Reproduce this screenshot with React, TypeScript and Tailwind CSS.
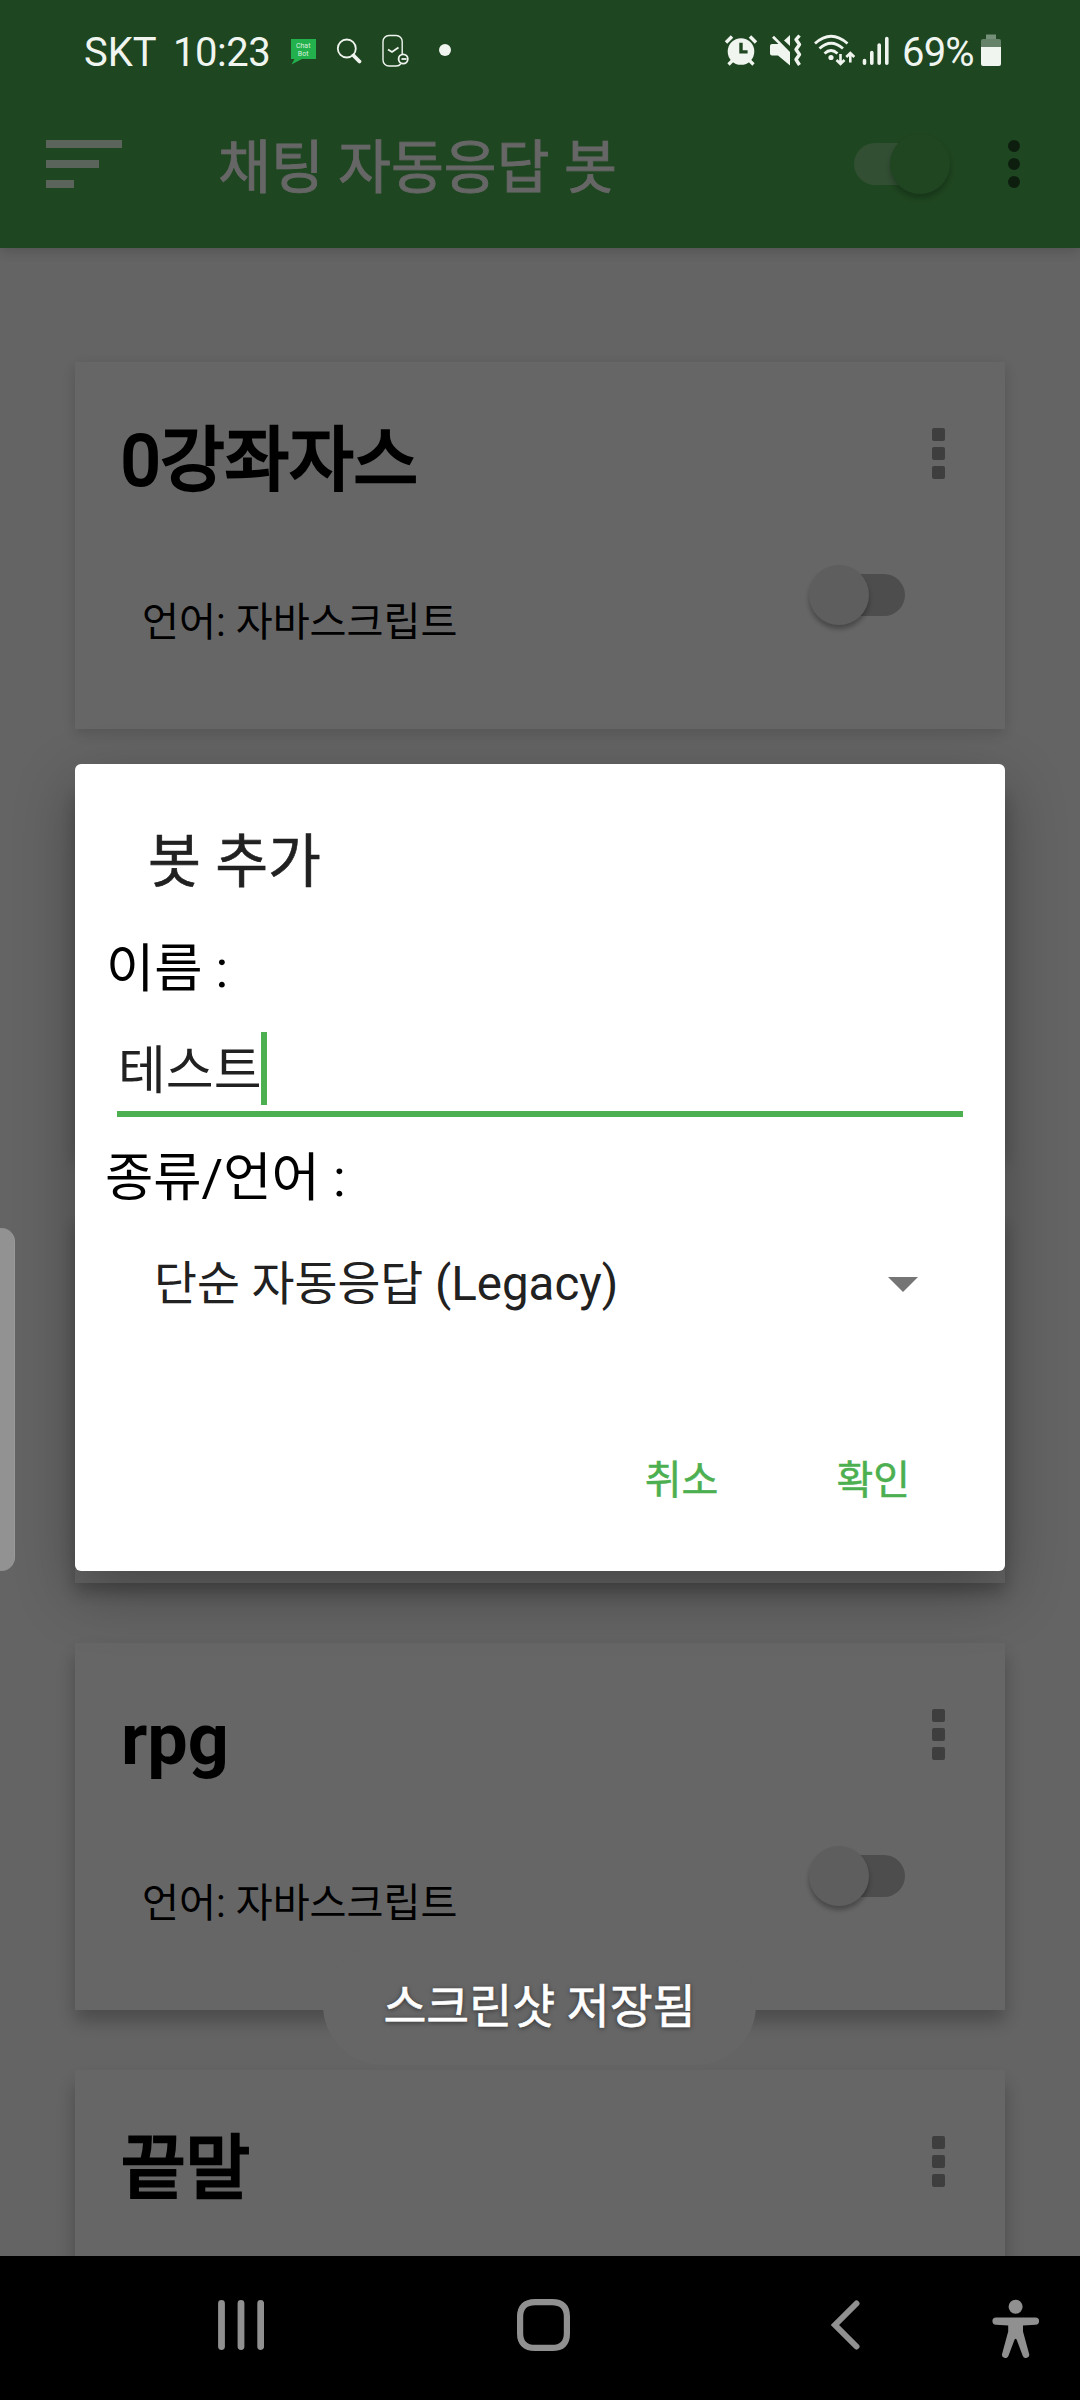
type Bot = { id: number; name?: string; lang?: string; title: string; shadow: string };

// Hangul titles use the regular cut thickened by a stroke, Latin ones the real bold
const hangulTitle = "mt-[59px] text-[70px] font-normal [-webkit-text-stroke:3px_black]";
const latinTitle = "mt-[57px] text-[72px] font-bold";

const bots: Bot[] = [
  { id: 1, name: "0강좌자스", lang: "자바스크립트", title: hangulTitle, shadow: "shadow-[0_4px_14px_rgba(0,0,0,0.16)]" },
  { id: 2, title: hangulTitle, shadow: "shadow-[0_7px_16px_rgba(0,0,0,0.2)]" },
  { id: 3, title: hangulTitle, shadow: "shadow-[0_9px_16px_rgba(0,0,0,0.24)]" },
  { id: 4, name: "rpg", lang: "자바스크립트", title: latinTitle, shadow: "shadow-[0_11px_18px_rgba(0,0,0,0.26)]" },
  { id: 5, name: "끝말", title: hangulTitle, shadow: "shadow-[0_13px_18px_rgba(0,0,0,0.26)]" },
];

function StatusBar() {
  return (
    <div className="relative z-20 flex h-[104px] items-start justify-between pl-[84px] pr-[79px] pt-[32px] text-[40px] leading-[42px] text-[#f0f5f0]">
      <div className="flex h-10 items-start">
        <span className="w-[89px]">SKT</span>
        <span className="w-[116px] tracking-[-0.5px]">10:23</span>

        {/* Chat bot notification */}
        <svg className="mt-[6px] ml-[1px]" width="27" height="28" viewBox="0 0 27 28">
          <path d="M1 1h25v20H12L1.500 26.500 4.500 21H1z" fill="#22b14c" />
          <text x="13.200" y="10" textAnchor="middle" fontSize="7" fill="#d8f0de">Chat</text>
          <text x="13.200" y="18" textAnchor="middle" fontSize="7" fill="#d8f0de">Bot</text>
        </svg>

        {/* Search */}
        <svg className="mt-[6px] ml-[19px]" width="27" height="28" viewBox="0 0 27 28" fill="none" stroke="currentColor">
          <circle cx="10.800" cy="10.500" r="9" strokeWidth="1.800" />
          <path d="M17.500 17.500l6 6" strokeWidth="3.800" strokeLinecap="round" />
        </svg>

        {/* Phone care */}
        <svg className="mt-[2px] ml-[18px]" width="28" height="35" viewBox="0 0 28 35" fill="none" stroke="currentColor">
          <path d="M21.200 20V7.500a6 6 0 0 0-6-6H8a6 6 0 0 0-6 6V26a6 6 0 0 0 6 6h7.200q3 0 4.500-2" strokeWidth="1.400" />
          <path d="M7 15.500l4 2.500 6.500-4.500" strokeWidth="1.800" />
          <circle cx="22.200" cy="25" r="4.600" strokeWidth="1.800" />
          <path d="M20.500 25h5" strokeWidth="1.800" />
        </svg>

        <span className="mt-3 ml-[30px] size-3 rounded-full bg-[#f0f5f0]" />
      </div>

      <div className="flex h-10 items-start">
        {/* Alarm */}
        <svg className="mt-[2px]" width="34" height="33" viewBox="0 0 34 33" fill="none" stroke="currentColor">
          <path d="M2 8.500l6-6M32 8.500l-6-6" strokeWidth="3.500" />
          <path d="M4.500 30.500l5-5M29.500 30.500l-5-5" strokeWidth="3.200" />
          <circle cx="17" cy="17.500" r="13.300" fill="currentColor" stroke="none" />
          <path d="M17 8.700v9.200h6.600" stroke="#1e4620" strokeWidth="3.400" />
        </svg>

        {/* Vibrate, muted speaker */}
        <svg className="ml-[12px] mt-[2px]" width="33" height="33" viewBox="0 0 33 33" fill="none" stroke="currentColor">
          <path d="M0 12q0-2 2-2h6.500L2 3.800l2-2L20 18v13.500L8 21.500H2q-2 0-2-2z" fill="currentColor" stroke="none" />
          <path d="M20 1v11l-6-5.500z" fill="currentColor" stroke="none" />
          <path d="M29.500 1.500l-3.500 4 3.500 5-3.500 5 3.500 5-3.500 5 3.500 5.500" strokeWidth="3.400" strokeLinejoin="round" />
        </svg>

        {/* Wifi */}
        <svg className="ml-[11px] mt-[2px]" width="41" height="33" viewBox="0 0 41 33" fill="none" stroke="currentColor" strokeWidth="2.800">
          <path d="M1 9.500q16-14.500 32.500 0M5.500 14.500q11.500-10.500 23.500 0M10.500 19.500q6.500-6 13 0" />
          <circle cx="17" cy="23.500" r="2.600" fill="currentColor" stroke="none" />
          <path d="M26.500 20v9.500M22.500 26l4 4 4-4M36.300 28.500V19M32.300 23l4-4 4 4" strokeWidth="2.600" />
        </svg>

        {/* Signal */}
        <svg className="ml-[7px] mt-[2px]" width="28" height="33" viewBox="0 0 28 33" stroke="currentColor" strokeWidth="3.600" strokeLinecap="round">
          <path d="M2.500 26.500v2.800M9.800 18.500v10.800M17.200 11v18.300M24.800 4.500v24.800" />
        </svg>

        <span className="ml-[12px] w-[79px] tracking-[-0.8px]">69%</span>

        {/* Battery */}
        <svg className="mt-[2px]" width="20" height="33" viewBox="0 0 20 33">
          <path d="M5 .500h10V5H5z" fill="#759078" />
          <path d="M2 5h16q2 0 2 2v6H0V7q0-2 2-2z" fill="#668369" />
          <path d="M0 13h20v17q0 2-2 2H2q-2 0-2-2z" fill="currentColor" />
        </svg>
      </div>
    </div>
  );
}

function Toolbar() {
  return (
    <div className="flex h-[144px] items-start pl-[46px] pr-[60px]">
      <div className="mt-[36px] flex w-[172px] flex-col gap-3">
        <span className="h-2 w-[76px] bg-[#e1fae1]" />
        <span className="h-2 w-[53px] bg-[#e1fae1]" />
        <span className="h-2 w-[28px] bg-[#e1fae1]" />
      </div>
      <h1 className="mt-[25px] grow text-[57.500px] leading-[80px] text-white [-webkit-text-stroke:0.8px_white]">채팅 자동응답 봇</h1>
      {/* Master switch, on */}
      <div className="mt-[30px] mr-[58px] flex h-[60px] w-[96px] items-center">
        <span className="h-[42px] w-[80px] rounded-full bg-[#7dc682]" />
        <span className="-ml-[44px] size-[60px] shrink-0 rounded-full bg-[#4fae51] shadow-[0_4px_6px_rgba(0,0,0,0.24)]" />
      </div>
      <div className="mt-[36px] flex flex-col gap-1.5">
        <span className="size-3 rounded-full bg-[#234d25]" />
        <span className="size-3 rounded-full bg-[#234d25]" />
        <span className="size-3 rounded-full bg-[#234d25]" />
      </div>
    </div>
  );
}

function BotCard({ name, lang, title, shadow }: Bot) {
  return (
    <div className={`h-[367px] shrink-0 bg-white ${shadow}`}>
      <div className="flex h-[203px] items-start justify-between pl-[46px] pr-[60px]">
        <h2 className={`leading-[80px] text-black ${title}`}>{name}</h2>
        <div className="mt-[66px] flex flex-col gap-1.5">
          <span className="size-[13px] rounded-[2px] bg-[#9b9b9b]" />
          <span className="size-[13px] rounded-[2px] bg-[#9b9b9b]" />
          <span className="size-[13px] rounded-[2px] bg-[#9b9b9b]" />
        </div>
      </div>
      {lang && (
        <div className="flex items-start justify-between pl-[67px] pr-[100px]">
          <p className="mt-[34px] text-[40.200px] leading-[48px] text-black">언어: {lang}</p>
          <div className="flex h-[60px] w-[96px] flex-row-reverse items-center">
            <span className="h-[42px] w-[80px] shrink-0 rounded-full bg-[#c0c0c0]" />
            <span className="z-0 -mr-[44px] size-[60px] shrink-0 rounded-full bg-[#ebebeb] shadow-[0_4px_5px_rgba(0,0,0,0.3)]" />
          </div>
        </div>
      )}
    </div>
  );
}

function AddBotDialog() {
  return (
    <div className="flex h-[807px] flex-col rounded-[6px] bg-white pt-[59px] shadow-[0_22px_60px_rgba(0,0,0,0.3)]">
      <h2 className="ml-[73px] text-[57.500px] leading-[80px] text-[#212121] [-webkit-text-stroke:0.6px_#212121]">봇 추가</h2>
      <p className="ml-[31px] mt-[31px] text-[52.500px] leading-[70px] text-black">이름 :</p>
      <div className="mx-[42px] mt-[28px] flex h-[85px] items-start border-b-[6px] border-[#4caf50] pl-[1px]">
        <span className="mt-[3px] text-[52px] leading-[73px] text-[#212121]">테스트</span>
        <span className="-ml-[1px] h-[73px] w-[6px] bg-[#4caf50]" />
      </div>
      <p className="ml-[30px] mt-[26px] text-[52.500px] leading-[70px] text-black">종류/언어 :</p>
      <div className="ml-[79px] mr-[87px] mt-[36px] flex h-[70px] items-center justify-between">
        <span className="text-[46.700px] leading-[70px] text-[#212121]">
          단순 자동응답 <span className="text-[47.500px]">(Legacy)</span>
        </span>
        <svg width="30" height="15" viewBox="0 0 30 15">
          <path d="M0 0h30L15 15z" fill="#757575" />
        </svg>
      </div>
      <div className="mr-[95px] mt-[137px] flex justify-end gap-[118px] text-[40px] leading-[50px] text-[#4caf50] [-webkit-text-stroke:0.5px_#4caf50]">
        <button>취소</button>
        <button>확인</button>
      </div>
    </div>
  );
}

function NavBar() {
  return (
    <nav className="relative z-20 flex h-[144px] shrink-0 items-start bg-black pl-[218px] pt-[41px] text-[#909090]">
      <svg className="mt-[3px]" width="46" height="50" viewBox="0 0 46 50" stroke="currentColor" strokeWidth="6.800" strokeLinecap="round">
        <path d="M3.500 3.500v43M23 3.500v43M42.700 3.500v43" />
      </svg>
      <svg className="ml-[253px] mt-[2px]" width="53" height="52" viewBox="0 0 53 52" fill="none" stroke="currentColor" strokeWidth="6.200">
        <path d="M18 3.100h17q14.900 0 14.900 14.500v16.800q0 14.500-14.900 14.500H18q-14.900 0-14.900-14.500V17.600Q3.100 3.100 18 3.100z" />
      </svg>
      <svg className="ml-[260px] mt-[3px]" width="31" height="50" viewBox="0 0 31 50" fill="none" stroke="currentColor" strokeWidth="6" strokeLinecap="round">
        <path d="M26.500 3.500L5 25l21.500 21.500" />
      </svg>
      <svg className="ml-[131px] mt-[1px]" width="48" height="60" viewBox="0 0 48 60" fill="currentColor">
        <circle cx="23.600" cy="8.700" r="7" />
        <path d="M4 19.500h39.500a3.600 3.600 0 0 1 0 7.200l-12.500.800v6l6 22a3.200 3.200 0 0 1-6.300 2.200L24.800 42q-1.200-2.500-2.400 0l-5.900 15.700a3.200 3.200 0 0 1-6.300-2.200l6-22v-6L4 26.700a3.600 3.600 0 0 1 0-7.200z" />
      </svg>
    </nav>
  );
}

export default function App() {
  return (
    <div className="relative flex h-[2400px] w-[1080px] flex-col overflow-hidden bg-[#fafafa] font-[Roboto,'Noto_Sans_CJK_KR',sans-serif]">
      <header className="h-[248px] shrink-0 bg-[#4caf50] shadow-[0_4px_12px_rgba(0,0,0,0.16)]">
        <StatusBar />
        <Toolbar />
      </header>

      <main className="flex h-[2008px] flex-col gap-[60px] overflow-hidden px-[75px] pt-[114px]">
        {bots.map((bot) => (
          <BotCard key={bot.id} {...bot} />
        ))}
      </main>

      <NavBar />

      {/* Dimmed layer with the open dialog */}
      <div className="absolute inset-0 z-10 bg-black/60 px-[75px] pt-[764px]">
        <AddBotDialog />
      </div>

      {/* Edge panel handle */}
      <div className="absolute left-0 top-[1228px] z-20 h-[343px] w-[15px] rounded-r-[14px] border-r border-[#9a9a9a] bg-[#929292]" />

      {/* Toast */}
      <div className="absolute left-[323px] top-[1945px] z-20 flex h-[120px] w-[433px] items-center justify-center rounded-full bg-[#666666]">
        <span className="mt-[3px] text-[46.700px] leading-[60px] text-white [-webkit-text-stroke:0.6px_white] [text-shadow:0_1px_5px_rgba(0,0,0,0.6)]">스크린샷 저장됨</span>
      </div>
    </div>
  );
}
